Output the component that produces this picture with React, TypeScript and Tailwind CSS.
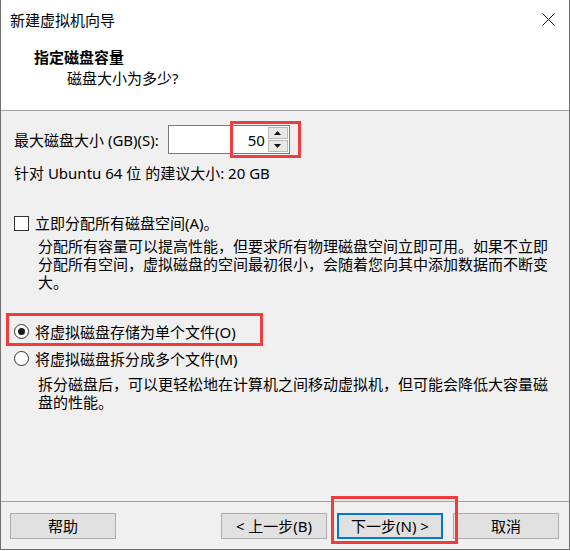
import React from "react";

const font = { fontFamily: '"Noto Sans", "Noto Sans CJK SC", sans-serif' };

function Radio({ checked }: { checked?: boolean }) {
  return (
    <span className="w-[15px] h-[15px] rounded-full border border-[#333333] bg-white flex items-center justify-center shrink-0">
      {checked && <span className="w-[7px] h-[7px] rounded-full bg-[#1a1a1a]" />}
    </span>
  );
}

function Button({ label, primary }: { label: string; primary?: boolean }) {
  return (
    <div
      className={
        "w-[106px] h-[26px] bg-[#e1e1e1] flex items-center justify-center text-[15px] text-black " +
        (primary ? "border-2 border-[#0078d7]" : "border border-[#adadad]")
      }
    >
      {label}
    </div>
  );
}

export default function App() {
  return (
    <div
      className="w-[570px] h-[550px] bg-[#f0f0f0] border-x border-b border-[#707070] flex flex-col text-[15px] text-black leading-[20px] overflow-hidden"
      style={font}
    >
      {/* header */}
      <div className="h-[111px] bg-white border-b border-[#a0a0a0] relative shrink-0">
        <div className="pt-[10px] pl-[9px]">新建虚拟机向导</div>
        <svg className="absolute left-[541px] top-[13px]" width="13" height="13" viewBox="0 0 13 13">
          <path d="M0.5 0.5 L12.5 12.5 M12.5 0.5 L0.5 12.5" stroke="#111" strokeWidth="1" />
        </svg>
        <div className="ml-[33px] mt-[16px] font-bold leading-[22px]">指定磁盘容量</div>
        <div className="ml-[66px]">磁盘大小为多少?</div>
      </div>

      {/* body */}
      <div className="flex-1 pl-[13px] pr-[12px]">
        <div className="flex items-center mt-[14px]">
          <span>最大磁盘大小 (GB)(S):</span>
          <div className="relative ml-[9px] w-[122px] h-[29px] bg-white border border-[#7a7a7a] flex">
            <div className="flex-1 flex items-center justify-end pr-[2px]">50</div>
            <div className="w-[22px] flex flex-col gap-[1px] p-[1px]">
              <div className="flex-1 bg-[#e8e8e8] border border-[#b8b8b8] flex items-center justify-center">
                <svg width="7" height="4" viewBox="0 0 7 4"><path d="M3.5 0 L7 4 L0 4 Z" fill="#111" /></svg>
              </div>
              <div className="flex-1 bg-[#e8e8e8] border border-[#b8b8b8] flex items-center justify-center">
                <svg width="7" height="4" viewBox="0 0 7 4"><path d="M0 0 L7 0 L3.5 4 Z" fill="#111" /></svg>
              </div>
            </div>
            <div className="absolute left-[61px] top-[-5px] w-[71px] h-[37px] border-[3px] border-[#f03c3c]" />
          </div>
        </div>

        <div className="mt-[9px]">针对 Ubuntu 64 位 的建议大小: 20 GB</div>

        <div className="flex items-center gap-[6px] mt-[30px]">
          <span className="w-[15px] h-[15px] border border-[#333333] bg-white shrink-0" />
          <span>立即分配所有磁盘空间(A)。</span>
        </div>
        <div className="pl-[24px] mt-[4px] leading-[18px]">
          <div>分配所有容量可以提高性能，但要求所有物理磁盘空间立即可用。如果不立即</div>
          <div>分配所有空间，虚拟磁盘的空间最初很小，会随着您向其中添加数据而不断变</div>
          <div>大。</div>
        </div>

        <div className="relative flex items-center gap-[6px] mt-[27px] h-[27px]">
          <Radio checked />
          <span>将虚拟磁盘存储为单个文件(O)</span>
          <div className="absolute left-[-8px] top-[-5px] w-[257px] h-[33px] border-[3px] border-[#f03c3c]" />
        </div>
        <div className="flex items-center gap-[6px] h-[27px]">
          <Radio />
          <span>将虚拟磁盘拆分成多个文件(M)</span>
        </div>
        <div className="pl-[24px] mt-[3px] leading-[18px]">
          <div>拆分磁盘后，可以更轻松地在计算机之间移动虚拟机，但可能会降低大容量磁</div>
          <div>盘的性能。</div>
        </div>
      </div>

      {/* footer */}
      <div className="h-[48px] border-t border-[#a0a0a0] shrink-0 flex pt-[11px] pl-[9px] pr-[10px]">
        <Button label="帮助" />
        <div className="flex-1" />
        <div className="flex gap-[10px]">
          <Button label="< 上一步(B)" />
          <div className="relative">
            <Button label="下一步(N) >" primary />
            <div className="absolute left-[-6px] top-[-17px] w-[127px] h-[48px] border-[3px] border-[#f03c3c]" />
          </div>
          <Button label="取消" />
        </div>
      </div>
    </div>
  );
}
